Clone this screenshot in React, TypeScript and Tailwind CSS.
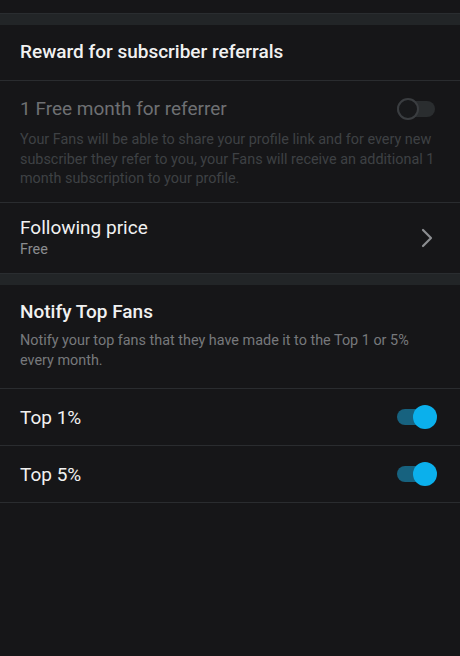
const Toggle = ({ on }: { on: boolean }) => {
  if (on) {
    return (
      <div className="relative w-[40px] h-[24px] flex items-center">
        <div className="w-[38px] h-[16px] rounded-full bg-[#17627f]" />
        <div className="absolute right-0 top-0 w-[24px] h-[24px] rounded-full bg-[#0bb0ec]" />
      </div>
    );
  }
  return (
    <div className="relative w-[40px] h-[22px] flex items-center">
      <div className="w-[38px] h-[16px] rounded-full bg-[#2a2d2f]" />
      <div className="absolute left-0 top-0 w-[22px] h-[22px] rounded-full bg-[#18191b] border-2 border-[#3a3d40]" />
    </div>
  );
};

const Band = () => <div className="h-[12px] bg-[#222527] border-t border-[#2a2d30]" />;

export default function App() {
  return (
    <div
      className="min-h-[656px] bg-[#161618] text-[#f1f1f1]"
      style={{ fontFamily: 'Roboto, "Noto Sans", sans-serif' }}
    >
      <div className="h-[13px]" />
      <Band />

      <div className="h-[56px] flex items-center px-5 border-b border-[#2a2c2f]">
        <h2 className="text-[19px] font-medium">Reward for subscriber referrals</h2>
      </div>

      <div className="px-5 pt-[16px] pb-[13px] border-b border-[#2a2c2f]">
        <div className="flex items-center justify-between pr-[3px]">
          <span className="text-[19px] leading-6 text-[#6e7073]">1 Free month for referrer</span>
          <Toggle on={false} />
        </div>
        <p className="mt-[9px] text-[14.4px] leading-[19.5px] text-[#3e4144]">
          Your Fans will be able to share your profile link and for every new subscriber they
          refer to you, your Fans will receive an additional 1 month subscription to your profile.
        </p>
      </div>

      <div className="h-[70px] px-5 flex items-center justify-between">
        <div>
          <div className="text-[19px] leading-6">Following price</div>
          <div className="text-[14.4px] leading-5 text-[#8a8c8f]">Free</div>
        </div>
        <svg
          width="12"
          height="20"
          viewBox="0 0 12 20"
          fill="none"
          stroke="#8c8e91"
          strokeWidth="2.2"
          strokeLinecap="round"
          strokeLinejoin="round"
          className="mr-[7px]"
        >
          <path d="M2 2l8 8-8 8" />
        </svg>
      </div>

      <Band />

      <div className="px-5 pt-[15px] pb-[17px] border-b border-[#2a2c2f]">
        <h3 className="text-[19px] leading-6 font-medium">Notify Top Fans</h3>
        <p className="mt-[7px] text-[14.4px] leading-5 text-[#77797c]">
          Notify your top fans that they have made it to the Top 1 or 5% every month.
        </p>
      </div>

      {['Top 1%', 'Top 5%'].map((label) => (
        <div
          key={label}
          className="h-[57px] px-5 flex items-center justify-between border-b border-[#2a2c2f]"
        >
          <span className="text-[19px] pt-[3px]">{label}</span>
          <div className="mr-[3px]">
            <Toggle on />
          </div>
        </div>
      ))}
    </div>
  );
}
